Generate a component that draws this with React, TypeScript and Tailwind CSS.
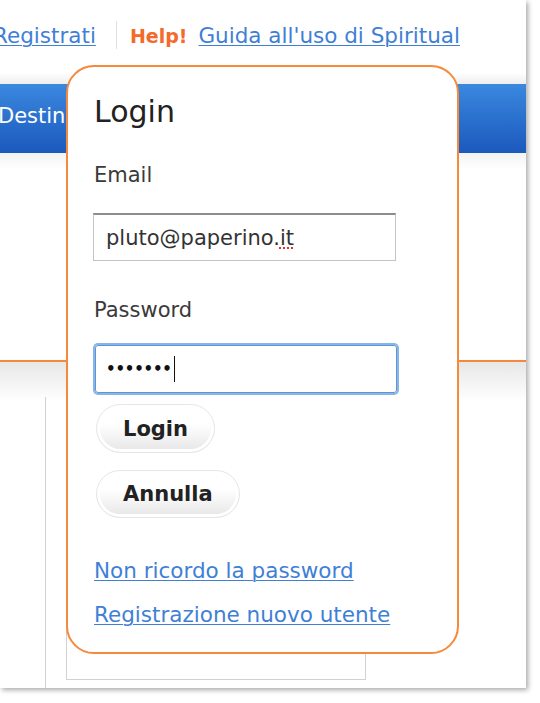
import React from "react";

export default function App() {
  return (
    <div className="relative w-[540px] h-[703px] overflow-hidden bg-white font-['DejaVu_Sans',sans-serif]">
      {/* page */}
      <div className="flex flex-col w-[526px] h-[688px] bg-white shadow-[2px_2px_5px_rgba(0,0,0,0.35)]">
        {/* top links */}
        <div className="flex items-baseline h-[73px] pt-[24px] text-[21.5px] leading-[24px] whitespace-nowrap">
          <a className="ml-[-7px] text-[#3f7fd6] underline decoration-1 underline-offset-2">Registrati</a>
          <span className="self-start ml-[20px] mt-[-3px] w-px h-[28px] bg-[#e0e0e0]" />
          <span className="ml-[13px] text-[19px] font-bold text-[#f36a2a]">Help!</span>
          <a className="ml-[11px] text-[#3f7fd6] underline decoration-1 underline-offset-2">Guida all'uso di Spiritual</a>
        </div>
        <div className="h-[11px] bg-linear-to-b from-white to-[#ededed]" />
        {/* blue bar */}
        <div className="h-[69px] pt-[20px] bg-linear-to-b from-[#3b88df] to-[#1c59bd] text-white text-[21px] leading-[24px] whitespace-nowrap">
          <div className="ml-[-2px] w-[68px] overflow-hidden">Destinazioni</div>
        </div>
        {/* white area */}
        <div className="h-[207px] bg-linear-to-b from-[#f3f3f3] via-white via-[8%] to-white" />
        {/* orange line */}
        <div className="h-[2px] bg-[#f5883a]" />
        {/* lower area */}
        <div className="flex flex-1 pt-[35px] bg-linear-to-b from-[#e7e7e7] via-white via-[12%] to-white">
          <div className="w-[45px]" />
          <div className="w-px bg-[#d2d2d2]" />
          <div className="ml-[20px] mb-[8px] w-[300px] flex-none border border-[#d2d2d2] bg-white" />
        </div>
      </div>

      {/* login popup */}
      <div className="absolute left-[66px] top-[65px] w-[393px] h-[589px] rounded-[28px] border-2 border-[#f58a3c] bg-white">
        <div className="flex flex-col items-start pl-[26px] text-[21px] leading-[24px] text-[#333]">
          <div className="mt-[28px] text-[30px] leading-[34px] text-[#222]">Login</div>
          <div className="mt-[34px] text-[#3a3a3a]">Email</div>
          <div className="mt-[26px] ml-[-1px] flex items-center w-[303px] h-[48px] border border-[#c4c4c4] border-t-2 border-t-[#8d8d8d] pl-[12px] text-[#333]">
            <span>
              pluto@paperino.
              <span className="underline decoration-dotted decoration-[#e03030] decoration-2 underline-offset-[3px]">it</span>
            </span>
          </div>
          <div className="mt-[37px] text-[#3a3a3a]">Password</div>
          <div className="mt-[23px] ml-[1px] flex items-center w-[302px] h-[48px] border border-[#5f97d6] ring-2 ring-[#86b5e6] rounded-[3px] pl-[10px] text-[#111]">
            <span className="text-[15px] leading-none tracking-[-0.2px] font-bold">•••••••</span>
            <span className="ml-[2px] w-px h-[26px] bg-[#111]" />
          </div>
          <button className="mt-[11px] ml-[2px] h-[49px] px-[26px] rounded-full border border-[#e6e6e6] bg-linear-to-b from-white from-40% to-[#e6e6e6] shadow-[inset_0_0_0_3px_#fff] font-bold text-[21px] text-[#222]">
            Login
          </button>
          <button className="mt-[17px] ml-[2px] h-[48px] px-[26px] rounded-full border border-[#e6e6e6] bg-linear-to-b from-white from-40% to-[#e6e6e6] shadow-[inset_0_0_0_3px_#fff] font-bold text-[21px] text-[#222]">
            Annulla
          </button>
          <a className="mt-[41px] text-[21.5px] text-[#3f7fd6] underline decoration-1 underline-offset-2 whitespace-nowrap">Non ricordo la password</a>
          <a className="mt-[20px] text-[21.5px] text-[#3f7fd6] underline decoration-1 underline-offset-2 whitespace-nowrap">Registrazione nuovo utente</a>
        </div>
      </div>
    </div>
  );
}
